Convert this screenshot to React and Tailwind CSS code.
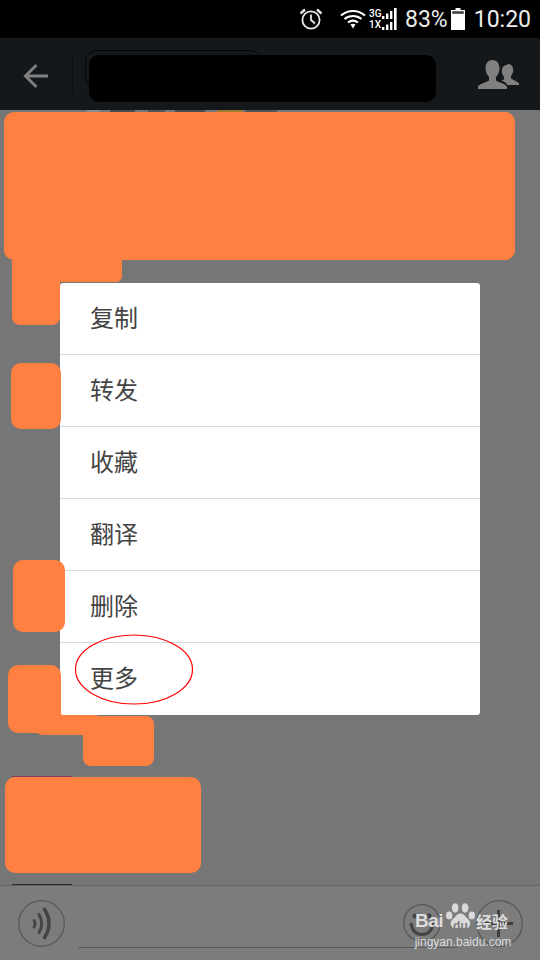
// Chat screen with the long-press message menu open
import React from 'react';

const menuItems = ['复制', '转发', '收藏', '翻译', '删除', '更多'];

// ── Icons ────────────────────────────────────────────────────────────────────
const AlarmIcon = () => (
  <svg width="24" height="24" viewBox="0 0 24 24" fill="none" stroke="#e8e8e8" strokeWidth="1.8" aria-hidden="true">
    <circle cx="12" cy="13" r="8.6" />
    <path d="M12 7.500V13l4 3.500" />
    <path d="M1.500 6.500 6 2.500M22.500 6.500 18 2.500" strokeWidth="2.400" />
  </svg>
);

const WifiIcon = () => (
  <svg width="26" height="20" viewBox="0 0 26 20" fill="none" stroke="#fff" strokeWidth="2.200" aria-hidden="true">
    <path d="M1 6.500C8 .5 18 .5 25 6.500" />
    <path d="M4.500 10c5-4 12-4 17 0" />
    <path d="M8 13.500c3-2.300 7-2.300 10 0" />
    <path d="M10.500 15.500 13 19.500l2.500-4c-1.600-.9-3.400-.9-5 0z" fill="#fff" stroke="none" />
  </svg>
);

const SignalBars = () => (
  <svg width="15" height="11" viewBox="0 0 15 11" fill="#fff" aria-hidden="true">
    <rect x="0" y="8" width="2.400" height="3" />
    <rect x="4" y="5.500" width="2.400" height="5.500" />
    <rect x="8" y="3" width="2.400" height="8" />
    <rect x="12" y="0" width="2.600" height="11" />
  </svg>
);

const BatteryIcon = () => (
  <svg width="14" height="22" viewBox="0 0 14 22" fill="#fff" aria-hidden="true">
    <path d="M4.500 0h5v2h4.500v20H0V2h4.500z" />
    <path d="M1.200 3.200h11.600v2.600H1.200z" fill="#000" fillOpacity="0.75" />
  </svg>
);

const BackArrow = () => (
  <svg width="26" height="26" viewBox="0 0 26 26" fill="none" stroke="#7f7f7f" strokeWidth="3" aria-hidden="true">
    <path d="M25 13H3M13.500 2 2.500 13l11 11" />
  </svg>
);

const GroupIcon = () => (
  <svg width="41" height="30" viewBox="0 0 41 30" fill="#808080" aria-hidden="true">
    <path d="M29 5c-3.200 0-5.200 2.600-5.200 6 0 2.500 1 4.500 2.200 5.800v2.500c-.8.500-1.800 1-2.600 1.300 2.600 1 5 2.400 6.100 4.400H41v-1.500c-.5-1.500-5.500-3.500-8-5v-2.700c1.200-1.300 2.200-3.300 2.200-5.800 0-3.400-2-6-5.200-6z" />
    <path
      d="M14.500 0C10 0 7.500 3.500 7.500 8.500c0 3.500 1.500 6.500 3.500 8.500v3.500C8 22.500 0 24.500 0 27v2h29v-2c0-2.500-8-4.500-11-6.500V17c2-2 3.500-5 3.500-8.500C21.500 3.500 19 0 14.500 0z"
      stroke="#14181b"
      strokeWidth="2"
      paintOrder="stroke"
    />
  </svg>
);

const VoiceIcon = () => (
  <svg className="shrink-0" width="47" height="47" viewBox="0 0 47 47" fill="none" strokeLinecap="round" aria-hidden="true">
    <circle cx="23.500" cy="23.500" r="22.800" stroke="#585858" strokeWidth="1.300" />
    <path d="M16 20.500c1.300 2 1.300 4.500 0 6.500" stroke="#444" strokeWidth="2.800" />
    <path d="M21 14.500c3.500 5.500 3.500 12.500 0 18" stroke="#444" strokeWidth="3" />
    <path d="M26.500 9.500c6 8.500 6 19.500 0 28" stroke="#444" strokeWidth="3.600" />
  </svg>
);

const EmojiIcon = () => (
  <svg width="38" height="38" viewBox="0 0 38 38" fill="none" aria-hidden="true">
    <circle cx="19" cy="19" r="18.300" stroke="#585858" strokeWidth="1.300" />
    <path d="M8 19c1 8 5 11.500 11 11.500S29 27 30 19" stroke="#444" strokeWidth="3" />
    <circle cx="12" cy="12" r="2.500" fill="#444" />
    <circle cx="26" cy="12" r="2.500" fill="#444" />
  </svg>
);

const PlusIcon = () => (
  <svg width="47" height="47" viewBox="0 0 47 47" fill="none" aria-hidden="true">
    <circle cx="23.500" cy="23.500" r="22.800" stroke="#585858" strokeWidth="1.300" />
    <path d="M22.500 10v27M9 23.500h28" stroke="#3f3f3f" strokeWidth="3" />
  </svg>
);

const PawIcon = () => (
  <svg width="29" height="29" viewBox="0 0 41 41" fill="#d9d9d9" aria-hidden="true">
    <ellipse cx="13" cy="7" rx="4.700" ry="6.800" />
    <ellipse cx="27" cy="7" rx="4.700" ry="6.800" />
    <ellipse cx="4.500" cy="17.500" rx="4.500" ry="5.500" />
    <ellipse cx="36.500" cy="17.500" rx="4.500" ry="5.500" />
    <path d="M20.500 15c5 0 7 5 11 8 5 4 3 14-5 13-3-.3-4-1-6-1s-4 1-7 1c-7 0-9.500-9-4-13 4-3 6-8 11-8z" />
  </svg>
);

// ── Orange cover-up blocks painted over the chat ─────────────────────────────
const Blocks = () => (
  <>
    <div className="absolute left-[4px] top-[2px] h-[148px] w-[511px] rounded-[10px] bg-[#ff8040]" />
    <div className="absolute left-[12px] top-[148px] h-[24px] w-[110px] rounded-b-[6px] bg-[#ff8040]" />
    <div className="absolute left-[12px] top-[150px] h-[65px] w-[48px] rounded-b-[8px] bg-[#ff8040]" />
    <div className="absolute left-[11px] top-[253px] h-[66px] w-[50px] rounded-[10px] bg-[#ff8040]" />
    <div className="absolute left-[13px] top-[450px] h-[72px] w-[52px] rounded-[10px] bg-[#ff8040]" />
    <div className="absolute left-[8px] top-[555px] h-[68px] w-[53px] rounded-[10px] bg-[#ff8040]" />
    <div className="absolute left-[37px] top-[605px] h-[20px] w-[60px] rounded-b-[5px] bg-[#ff8040]" />
    <div className="absolute left-[83px] top-[606px] h-[50px] w-[71px] rounded-[8px] bg-[#ff8040]" />
    <div className="absolute left-[5px] top-[667px] h-[96px] w-[196px] rounded-[10px] bg-[#ff8040]" />
  </>
);

const App = () => (
  <div className="flex h-[960px] w-[540px] flex-col overflow-hidden bg-[#767676] font-['Roboto','Noto_Sans_CJK_SC',sans-serif]">
    {/* Status bar */}
    <div className="flex h-[38px] shrink-0 items-center justify-end bg-black pr-[9px]">
      <AlarmIcon />
      <div className="ml-[17px]">
        <WifiIcon />
      </div>
      <div className="ml-[3px] flex flex-col text-[10px] font-medium leading-[11px] text-white">
        <div className="flex items-end">
          <span className="w-[13px]">3G</span>
          <SignalBars />
        </div>
        <div className="flex items-end">
          <span className="w-[13px]">1X</span>
          <SignalBars />
        </div>
      </div>
      <span className="ml-[8px] text-[23px] leading-none text-[#ededed]">83%</span>
      <div className="ml-[3px]">
        <BatteryIcon />
      </div>
      <span className="ml-[9px] text-[23px] leading-none text-[#ededed]">10:20</span>
    </div>

    {/* Header */}
    <div className="relative flex h-[72px] shrink-0 items-center bg-[#14181b]">
      <div className="ml-[23px] mt-[4px]">
        <BackArrow />
      </div>
      <div className="ml-[23px] h-[37px] w-px bg-[#0b0d0f]" />
      <div className="ml-[12px] mt-[12px] h-[40px] w-[177px] self-start rounded-[12px] border border-[#050607]" />
      <div className="ml-auto mr-[21px] mt-[2px]">
        <GroupIcon />
      </div>
      {/* black cover over the title */}
      <div className="absolute left-[89px] top-[17px] h-[47px] w-[347px] rounded-[10px] bg-black" />
    </div>

    {/* Chat */}
    <div className="relative flex-1 border-b border-[#666]">
      {/* bits of the message that peek out under the header */}
      <div className="absolute left-[87px] top-0 h-[2px] w-[13px] bg-[#8c8c8c]" />
      <div className="absolute left-[110px] top-0 h-[2px] w-[25px] bg-[#4a4a4a]" />
      <div className="absolute left-[148px] top-0 h-[2px] w-[17px] bg-[#555]" />
      <div className="absolute left-[175px] top-0 h-[2px] w-[30px] bg-[#4a4a4a]" />
      <div className="absolute left-[217px] top-0 h-[2px] w-[26px] bg-[#a07a30]" />
      <div className="absolute left-[245px] top-0 h-[2px] w-[32px] bg-[#555]" />
      <div className="absolute left-[12px] top-[666px] h-px w-[60px] bg-[#8a3a5a]" />
      <div className="absolute bottom-0 left-[12px] h-px w-[60px] bg-[#1f2a2a]" />

      {/* Long-press menu */}
      <div className="absolute left-[60px] top-[173px] w-[420px] overflow-hidden rounded-[3px] bg-white">
        {menuItems.map((label, i) => (
          <div
            key={label}
            className={`flex h-[72px] items-center pl-[30px] text-[24px] text-[#444] ${i < menuItems.length - 1 ? 'border-b border-[#d8d8d8]' : ''}`}
          >
            {label}
          </div>
        ))}
      </div>

      <Blocks />

      {/* Red hand-drawn ellipse on the screenshot */}
      <svg className="absolute left-[74px] top-[524px]" width="120" height="71" viewBox="0 0 120 71" fill="none" aria-hidden="true">
        <ellipse cx="60" cy="35.500" rx="58.500" ry="34.500" stroke="#f00" strokeWidth="1.200" />
      </svg>
    </div>

    {/* Input bar */}
    <div className="relative flex h-[74px] shrink-0 items-center bg-[#7c7c7c] pl-[18px]">
      <VoiceIcon />
      <div className="ml-[13px] mt-[48px] h-px w-[379px] shrink-0 bg-[#5c5c5c]" />
      <div className="absolute left-[403px] top-[18px]">
        <EmojiIcon />
      </div>
      <div className="absolute left-[476px] top-[14px]">
        <PlusIcon />
      </div>

      {/* Baidu watermark */}
      <div className="absolute left-[415px] top-[17px] flex w-[96px] flex-col items-center text-[#dcdcdc]">
        <div className="flex h-[29px] w-full items-end font-['Liberation_Sans',sans-serif]">
          <span className="text-[19px] font-bold leading-[22px] tracking-[-0.5px]">Bai</span>
          <div className="relative ml-[3px] h-[29px] w-[29px] shrink-0">
            <PawIcon />
            <span className="absolute left-[7px] top-[17px] text-[12px] font-bold leading-none text-[#7c7c7c]">du</span>
          </div>
          <span className="ml-[1px] shrink-0 font-['Noto_Sans_CJK_SC',sans-serif] text-[16px] font-bold leading-[21px]">经验</span>
        </div>
        <span className="mt-[3px] whitespace-nowrap font-['Liberation_Sans',sans-serif] text-[12px] leading-[14px]">jingyan.baidu.com</span>
      </div>
    </div>
  </div>
);

export default App;
